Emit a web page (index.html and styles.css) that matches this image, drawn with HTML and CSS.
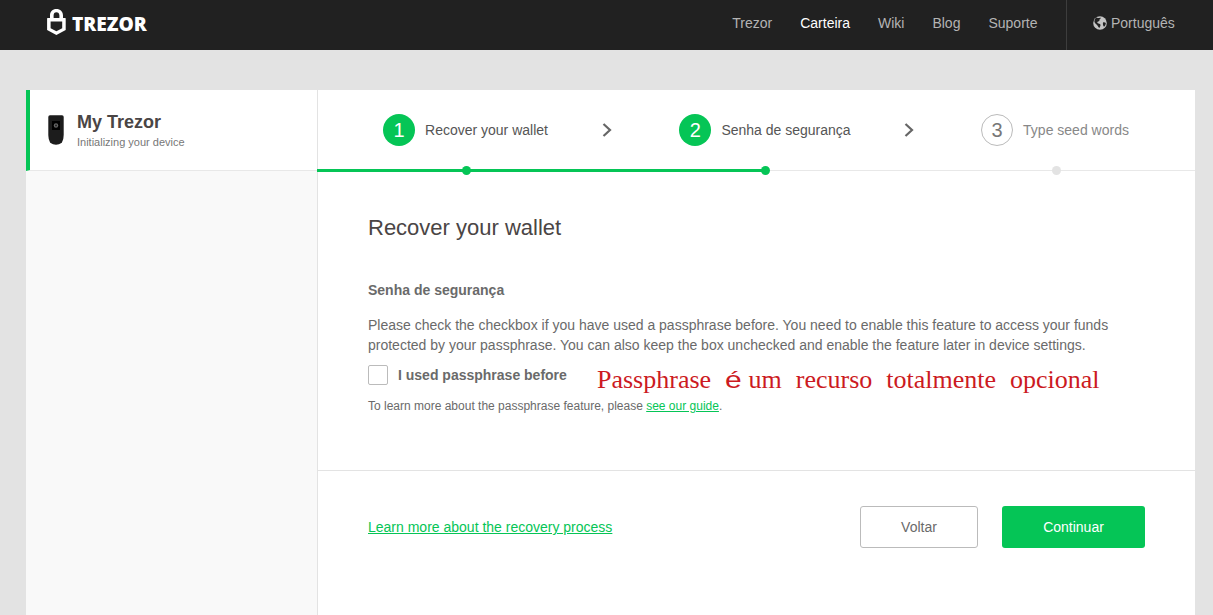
FILE: index.html
```html
<!DOCTYPE html>
<html lang="pt">
<head>
<meta charset="utf-8">
<title>Trezor Wallet</title>
<link rel="stylesheet" href="styles.css">
</head>
<body>
<header class="topbar">
  <a class="logo" href="#">
    <svg class="logo-icon" width="19" height="26" viewBox="0 0 19 26" aria-hidden="true">
      <path fill="#fff" fill-rule="evenodd" d="M9.4 0C5.6 0 3 2.6 3 6.4V9H0.6Q0.1 9 0.1 9.6V21L9.4 26L18.7 21V9.6Q18.7 9 18.2 9H16V6.4C16 2.6 13.2 0 9.4 0ZM9.4 3.2C11.2 3.2 12.4 4.4 12.4 6.6V9H6.6V6.6C6.6 4.4 7.6 3.2 9.4 3.2ZM3.6 12.6H15.2V19.2L9.4 22.2L3.6 19.2Z"/>
    </svg>
    <span class="logo-text">TREZOR</span>
  </a>
  <nav class="nav">
    <a href="#">Trezor</a>
    <a href="#" class="active">Carteira</a>
    <a href="#">Wiki</a>
    <a href="#">Blog</a>
    <a href="#">Suporte</a>
  </nav>
  <div class="lang">
    <svg width="14" height="14" viewBox="0 0 14 14" aria-hidden="true">
      <circle cx="7" cy="7" r="6.8" fill="#c4c4c4"/>
      <path fill="#212121" d="M3.2 1.6C4.6 2.2 6 2 7.4 1.4C8 2.4 7.2 3.2 6.4 3.6C6.8 4.6 6.2 5.4 5.2 5.4C4.2 5.6 4 6.6 4.8 7.2C5.8 7.8 6.8 7.6 7.4 8.6C7.8 9.6 7 10.8 6.4 12C5 11 4.8 9.6 3.8 8.8C2.6 8 1.6 7 1.4 5.6C1.6 4 2.2 2.6 3.2 1.6Z"/>
      <path fill="#212121" d="M10.2 6.2C11.2 6 12.2 6.2 12.8 7C12.8 8.4 12.2 9.8 11 10.8C10.2 9.8 9.4 7.6 10.2 6.2Z"/>
    </svg>
    <span>Português</span>
  </div>
</header>

<main class="page">
  <aside class="sidebar">
    <div class="device">
      <svg class="device-icon" width="16" height="30" viewBox="0 0 16 30" aria-hidden="true">
        <path fill="#1c1c1c" d="M2 0.3H14Q15.7 0.3 15.7 2V20Q15.7 25 13.8 27.8Q11 29.7 8 29.7Q5 29.7 2.2 27.8Q0.3 25 0.3 20V2Q0.3 0.3 2 0.3Z"/>
        <rect x="4" y="6" width="8" height="9" fill="#000"/>
        <circle cx="8" cy="10.5" r="2.2" fill="#666"/>
        <circle cx="8" cy="10.5" r="1" fill="#222"/>
      </svg>
      <div>
        <div class="device-name">My Trezor</div>
        <div class="device-status">Initializing your device</div>
      </div>
    </div>
  </aside>

  <section class="content">
    <div class="steps">
      <div class="step done">
        <span class="num">1</span><span class="label">Recover your wallet</span>
        <svg class="chev" width="10" height="14" viewBox="0 0 10 14" aria-hidden="true"><path d="M1.5 1L8 7L1.5 13" fill="none" stroke="#666" stroke-width="2.2"/></svg>
      </div>
      <div class="step half">
        <span class="num">2</span><span class="label">Senha de segurança</span>
        <svg class="chev" width="10" height="14" viewBox="0 0 10 14" aria-hidden="true"><path d="M1.5 1L8 7L1.5 13" fill="none" stroke="#666" stroke-width="2.2"/></svg>
      </div>
      <div class="step todo">
        <span class="num">3</span><span class="label">Type seed words</span>
      </div>
    </div>

    <div class="body">
      <h1>Recover your wallet</h1>
      <h2>Senha de segurança</h2>
      <p class="desc">Please check the checkbox if you have used a passphrase before. You need to enable this feature to access your funds protected by your passphrase. You can also keep the box unchecked and enable the feature later in device settings.</p>
      <div class="check-row">
        <span class="box"></span>
        <span class="check-label">I used passphrase before</span>
        <span class="note">Passphrase <span class="note-verb"><span class="note-e">é</span> </span>um recurso totalmente opcional</span>
      </div>
      <p class="small">To learn more about the passphrase feature, please <a href="#">see our guide</a>.</p>
    </div>

    <div class="actions">
      <a class="more" href="#">Learn more about the recovery process</a>
      <div class="buttons">
        <button class="btn ghost">Voltar</button>
        <button class="btn primary">Continuar</button>
      </div>
    </div>
  </section>
</main>
</body>
</html>
```
FILE: styles.css
```css
* { box-sizing: border-box; }
html, body { height: 100%; }
body {
  margin: 0;
  background: #e3e3e3;
  font-family: "Liberation Sans", Arial, sans-serif;
  color: #6a6a6a;
  overflow: hidden;
}
a { text-decoration: none; color: inherit; }

.topbar {
  height: 50px;
  background: #212121;
  display: flex;
  align-items: center;
  padding-left: 47px;
}
.logo { display: flex; align-items: flex-start; gap: 6px; margin-bottom: 7px; }
.logo-icon { display: block; }
.logo-text {
  font-family: "Open Sans", sans-serif;
  font-weight: 800;
  font-size: 19.2px;
  line-height: 22px;
  padding-top: 4px;
  color: #fff;
}
.nav { display: flex; margin-left: auto; gap: 28px; font-size: 14px; color: #b4b4b4; margin-bottom: 4px; }
.nav .active { color: #fff; }
.lang {
  margin-left: 28.5px;
  height: 50px;
  width: 147px;
  border-left: 1px solid #3d3d3d;
  display: flex;
  align-items: center;
  padding: 0 0 4px 26px;
  gap: 4px;
  font-size: 14px;
  color: #b4b4b4;
}

.page {
  display: flex;
  margin: 40px 18px 0 26px;
  height: 525px;
}
.sidebar { width: 291px; background: #f9f9f9; }
.device {
  height: 81px;
  background: #fff;
  border-left: 4px solid #05c556;
  border-bottom: 1px solid #e8e8e8;
  display: flex;
  align-items: center;
  padding-left: 18px;
  gap: 13px;
}
.device-icon { display: block; margin-bottom: 1px; }
.device-name { font-size: 18px; font-weight: 700; line-height: 22px; margin-top: 1px; color: #4a4545; }
.device-status { font-size: 11px; line-height: 16px; margin-top: 1px; color: #777; }

.content { flex: 1; background: #fff; border-left: 1px solid #e3e3e3; }
.steps {
  display: grid;
  grid-template-columns: 296px 302px 1fr;
  height: 81px;
}
.step {
  position: relative;
  display: flex;
  align-items: center;
  justify-content: center;
  gap: 10px;
  border-bottom: 1px solid #e8e8e8;
  font-size: 14px;
  color: #555;
}
.step::before {
  content: "";
  position: absolute;
  left: 0;
  bottom: -2px;
  height: 3px;
  background: #05c556;
}
.step::after {
  content: "";
  position: absolute;
  left: 50%;
  bottom: -5px;
  width: 9px;
  height: 9px;
  margin-left: -4px;
  border-radius: 50%;
  background: #05c556;
}
.step.done::before { left: -1px; width: calc(100% + 1px); }
.step.half::before { width: 50%; }
.step.todo { padding-right: 1px; }
.step.todo::before { display: none; }
.step.todo::after { background: #e3e3e3; }
.num {
  width: 32px;
  height: 32px;
  border-radius: 50%;
  background: #05c556;
  color: #fff;
  font-size: 20px;
  display: flex;
  align-items: center;
  justify-content: center;
}
.step.done .num { margin-left: -1px; }
.step.todo .num { background: #fff; border: 1px solid #bbb; color: #777; }
.step.todo .label { color: #888; }
.chev { position: absolute; right: 2px; top: 33px; }

.body { height: 300px; border-bottom: 1px solid #e3e3e3; padding: 44px 50px 0; }
h1 { margin: 0; font-size: 22px; line-height: 26px; font-weight: 400; color: #4a4545; }
h2 { margin: 39px 0 0; font-size: 14px; line-height: 20px; font-weight: 700; color: #6a6a6a; }
.desc { margin: 15px 0 0; font-size: 14px; line-height: 20px; }
.check-row { display: flex; align-items: center; margin-top: 10px; height: 20px; position: relative; }
.box { width: 20px; height: 20px; border: 1px solid #bbb; border-radius: 2px; background: #fff; }
.check-label { margin-left: 10px; font-size: 14px; font-weight: 700; }
.note {
  position: absolute;
  left: 229px;
  top: 0;
  white-space: nowrap;
  font-family: "Liberation Serif", serif;
  font-size: 26px;
  line-height: 30px;
  word-spacing: 7.5px;
  color: #cc1a22;
}
.note-verb { word-spacing: 0; }
.note-e {
  display: inline-block;
  width: 17px;
  font-family: "Liberation Sans", sans-serif;
  font-size: 24px;
  line-height: 24px;
  transform: scaleX(1.25);
  transform-origin: left;
}
.small { margin: 12px 0 0; font-size: 12px; line-height: 18px; }
.small a { color: #05c556; text-decoration: underline; }

.actions {
  display: flex;
  align-items: center;
  justify-content: space-between;
  padding: 35px 50px 0;
}
.more { font-size: 14px; color: #05c556; text-decoration: underline; }
.buttons { display: flex; gap: 24px; }
.btn {
  height: 42px;
  border-radius: 3px;
  font-family: inherit;
  font-size: 14px;
}
.ghost { width: 118px; background: #fff; border: 1px solid #bbb; color: #6a6a6a; }
.primary { width: 143px; background: #05c556; border: 0; color: #fff; }
```
